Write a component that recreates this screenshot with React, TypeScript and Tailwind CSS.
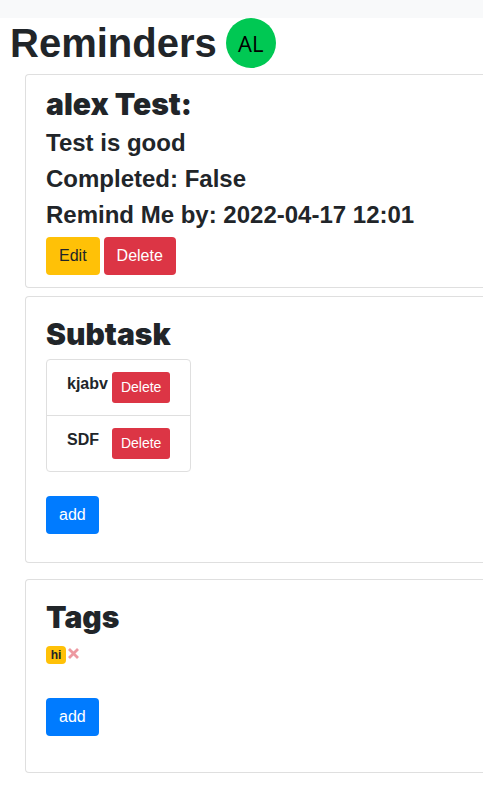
import type { ReactNode } from "react";

const subtasks = ["kjabv", "SDF"];
const details = ["Test is good", "Completed: False", "Remind Me by: 2022-04-17 12:01"];

function Card({ className, title, children }: { className: string; title: string; children: ReactNode }) {
  return (
    <section className={`rounded-l border-y border-l border-[#dfdfdf] px-5 ${className}`}>
      <h2 className="mb-2 font-[Inter,sans-serif] text-[30px] leading-[34px] font-black">{title}</h2>
      {children}
    </section>
  );
}

function AddButton() {
  return (
    <button type="button" className="block h-[38px] rounded bg-[#007bff] px-[13px] text-base text-white">
      add
    </button>
  );
}

export default function App() {
  return (
    <div className="min-h-screen bg-white font-['Liberation_Sans',Arial,sans-serif] text-[#212529]">
      <nav className="h-[18px] bg-[#f8f9fa]" />
      <header className="flex items-center gap-[9px] pl-2.5">
        <h1 className="text-[40px] leading-[48px] font-bold">Reminders</h1>
        <div className="flex size-[50px] items-center justify-center rounded-full bg-[#00c853] font-['Open_Sans',sans-serif] text-[22px] font-normal text-black">
          AL
        </div>
      </header>

      <main className="pt-1.5 pl-[25px]">
        <Card title="alex Test:" className="mb-2 pt-3 pb-3">
          {details.map((line) => (
            <h3 key={line} className="mb-2 text-2xl leading-7 font-bold">
              {line}
            </h3>
          ))}
          <div className="flex gap-1">
            <button type="button" className="h-[38px] rounded bg-[#ffc107] px-[13px] text-base">
              Edit
            </button>
            <button type="button" className="h-[38px] rounded bg-[#dc3545] px-[13px] text-base text-white">
              Delete
            </button>
          </div>
        </Card>

        <Card title="Subtask" className="mb-4 pt-5 pb-7">
          <ul className="mb-6 w-fit divide-y divide-[#dfdfdf] rounded border border-[#dfdfdf]">
            {subtasks.map((task) => (
              <li key={task} className="flex justify-between gap-1 px-5 py-3">
                <span className="text-base leading-6 font-bold">{task}</span>
                <button type="button" className="h-[31px] rounded-[3px] bg-[#dc3545] px-[9px] pb-0.5 text-sm text-white">
                  Delete
                </button>
              </li>
            ))}
          </ul>
          <AddButton />
        </Card>

        <Card title="Tags" className="mb-4 pt-5 pb-9">
          <div className="mb-8 flex h-6 items-start gap-0.5">
            <span className="mt-1 w-5 rounded bg-[#ffc107] text-center text-xs leading-[18px] font-bold">hi</span>
            <button type="button" aria-label="Remove tag hi" className="mt-1.5 text-[#dc3545] opacity-50">
              <svg viewBox="0 0 11 11" className="size-[11px]" fill="none" stroke="currentColor" strokeWidth="2.8">
                <path d="M1 1 L10 10 M10 1 L1 10" />
              </svg>
            </button>
          </div>
          <AddButton />
        </Card>
      </main>
    </div>
  );
}
